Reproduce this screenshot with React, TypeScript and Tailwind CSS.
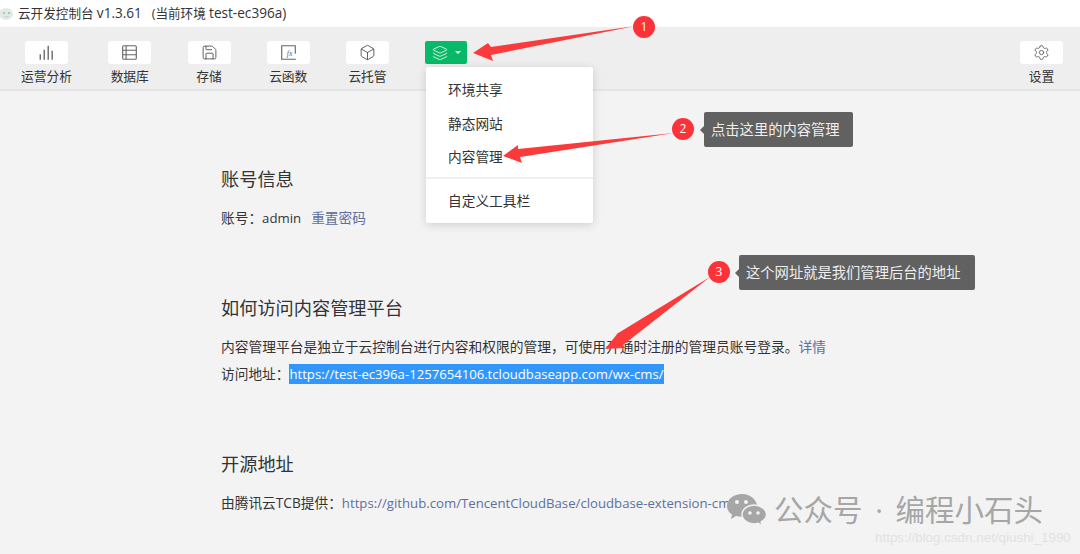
import React from "react";
import { Box, Layers, Save, Settings } from "lucide-react";

const cjk = "font-['Open_Sans','Noto_Sans_CJK_SC',sans-serif]";

const BarsIcon = () => (
  <svg width="17" height="17" viewBox="0 0 15 15" fill="none" stroke="#666" strokeWidth="1.200">
    <path d="M2 9v5M5.500 5v9M9 1.500v12.500M12.500 6v8" />
  </svg>
);

const TableIcon = () => (
  <svg width="17" height="17" viewBox="0 0 15 15" fill="none" stroke="#666" strokeWidth="1">
    <rect x="1.500" y="1.500" width="12" height="12" rx="1" />
    <path d="M1.500 5.500h12M1.500 9.500h12M4.500 1.500v12" />
  </svg>
);

const FxIcon = () => (
  <svg width="17" height="17" viewBox="0 0 15 15" fill="none" stroke="#666" strokeWidth="1">
    <path d="M14 13.500H1.500v-12h12v7" />
    <text x="6" y="11" fontSize="7" fontStyle="italic" fill="#666" stroke="none" fontFamily="Liberation Serif, serif">fx</text>
  </svg>
);

const tools = [
  { label: "运营分析", icon: <BarsIcon /> },
  { label: "数据库", icon: <TableIcon /> },
  { label: "存储", icon: <Save size={17} strokeWidth={1.300} color="#555" /> },
  { label: "云函数", icon: <FxIcon /> },
  { label: "云托管", icon: <Box size={17} strokeWidth={1.300} color="#555" /> },
];

const ToolItem = ({ label, icon }: { label: string; icon: React.ReactNode }) => (
  <div className="flex flex-col items-center">
    <div className="flex h-[23px] w-[43px] items-center justify-center rounded-[3px] bg-white">{icon}</div>
    <div className="mt-[3px] text-[12.75px] leading-[18px] text-[#333]">{label}</div>
  </div>
);

const Section = ({ title, className, children }: { title: string; className: string; children: React.ReactNode }) => (
  <section className={className}>
    <h2 className="text-[18.2px] leading-[26px] text-[#333]">{title}</h2>
    {children}
  </section>
);

const Tip = ({ text, className }: { text: string; className: string }) => (
  <div className={`absolute flex h-[35px] items-center rounded-[2px] bg-[#616161] pl-[7px] text-[14.3px] text-[#eeeeee] ${className}`}>
    <span className="absolute left-[-4px] top-[14px] h-0 w-0 border-y-[4px] border-r-[4px] border-y-transparent border-r-[#616161]" />
    {text}
  </div>
);

const Badge = ({ n, className }: { n: number; className: string }) => (
  <div className={`absolute flex h-[22px] w-[22px] items-center justify-center rounded-full bg-[#fb3338] text-[12px] text-white ${className}`}>{n}</div>
);

const AppIcon = () => (
  <svg className="mr-[4px]" width="14" height="14" viewBox="0 0 14 14">
    <ellipse cx="6" cy="7" rx="7" ry="6" fill="#e3e9e5" />
    <circle cx="4" cy="6" r="1" fill="#7fc8a0" />
    <circle cx="9" cy="6" r="1" fill="#7fc8a0" />
    <path d="M4.500 9.500q2 1.200 4 0" fill="none" stroke="#9fcab2" strokeWidth="0.800" />
  </svg>
);

export default function App() {
  return (
    <div className={`relative h-[554px] w-[1080px] overflow-hidden bg-[#f3f3f3] ${cjk}`}>
      <header className="flex h-[27px] items-center bg-white text-[12.6px] text-[#333]">
        <AppIcon />
        <span className="whitespace-pre">
          云开发控制台 <span className="text-[13.6px]">v1.3.61</span>
          {"   ("}当前环境 <span className="text-[13.6px]">test-ec396a)</span>
        </span>
      </header>

      <nav className="flex h-[64px] items-start gap-[36.250px] border-b-2 border-[#e4e4e4] bg-[#eeeeee] pl-[21px] pr-[17px] pt-[14px]">
        {tools.map((t) => (
          <ToolItem key={t.label} label={t.label} icon={t.icon} />
        ))}
        <div className="flex h-[23px] w-[42px] items-center justify-center gap-[7px] rounded-[2px] bg-[#07b968]">
          <Layers size={16} strokeWidth={1.200} color="#fff" />
          <span className="h-0 w-0 border-x-[3px] border-t-[3px] border-x-transparent border-t-white" />
        </div>
        <div className="ml-auto">
          <ToolItem label="设置" icon={<Settings size={17} strokeWidth={1.200} color="#555" />} />
        </div>
      </nav>

      <main className="pl-[221px]">
        <Section title="账号信息" className="pt-[75px]">
          <p className="mt-[15px] text-[13.7px] leading-[22px] text-[#333]">
            账号{"\uFF1A"}<span className="text-[13.2px]">admin</span>
            <a className="ml-[10px] text-[#5f6f9e]">重置密码</a>
          </p>
        </Section>
        <Section title="如何访问内容管理平台" className="pt-[66px]">
          <p className="mt-[12px] text-[13.75px] leading-[27px] text-[#333]">
            内容管理平台是独立于云控制台进行内容和权限的管理{"\uFF0C"}可使用开通时注册的管理员账号登录{"\u3002"}<a className="text-[#5f6f9e]">详情</a>
          </p>
          <p className="text-[13.7px] leading-[27px] text-[#333]">
            访问地址{"\uFF1A"}<span className="bg-[#3297fd] py-[1px] text-[13.14px] text-white">https://test-ec396a-1257654106.tcloudbaseapp.com/wx-cms/</span>
          </p>
        </Section>
        <Section title="开源地址" className="pt-[63px]">
          <p className="mt-[15px] text-[13.7px] leading-[22px] text-[#333]">
            由腾讯云TCB提供{"\uFF1A"}<a className="text-[13.2px] text-[#5f6f9e]">https://github.com/TencentCloudBase/cloudbase-extension-cms</a>
          </p>
        </Section>
      </main>

      {/* 下拉菜单 */}
      <div className="absolute left-[426px] top-[67px] w-[167px] rounded-[2px] bg-white pt-[7px] text-[13.7px] text-[#333] shadow-[0_2px_10px_rgba(0,0,0,0.15)]">
        <div className="flex h-[33.500px] items-center pl-[22px]">环境共享</div>
        <div className="flex h-[33.500px] items-center pl-[22px]">静态网站</div>
        <div className="flex h-[33.500px] items-center pl-[22px]">内容管理</div>
        <div className="mt-[2px] h-[2px] bg-[#efefef]" />
        <div className="flex h-[44px] items-center pl-[22px] pt-[1px]">自定义工具栏</div>
      </div>

      {/* 标注 */}
      <svg className="pointer-events-none absolute left-0 top-0" width="1080" height="554" fill="#fb3b3b">
        <polygon points="635,26 491,47 488,43 473,53 493,61 491,55" />
        <polygon points="674,133 518,149 518,145 503,156 522,163 520,157" />
        <polygon points="710,277 615,335 618,333 605,349 625,348 623,345" />
      </svg>
      <Badge n={1} className="left-[633px] top-[16px]" />
      <Badge n={2} className="left-[672px] top-[118px]" />
      <Badge n={3} className="left-[708px] top-[261px]" />
      <Tip text="点击这里的内容管理" className="left-[704px] top-[112px] w-[149px]" />
      <Tip text="这个网址就是我们管理后台的地址" className="left-[739px] top-[255px] w-[236px]" />

      {/* 水印 */}
      <svg className="absolute left-[726px] top-[492px]" width="42" height="36" viewBox="0 0 42 36">
        <path d="M16 2C7.500 2 1 7.500 1 14c0 3.500 2 6.500 5 8.500L5 27l5-3c2 .5 4 .8 6 .8 8.500 0 15-5.500 15-11S24.500 2 16 2z" fill="#a6a6a6" />
        <path d="M28 13c-6.500 0-12 4.300-12 9.500S21.500 32 28 32c1.500 0 3-.2 4.300-.7L36 34l-.8-4c3-1.800 5.300-4.500 5.300-7.500C40.500 17.300 34.500 13 28 13z" fill="#a6a6a6" stroke="#f3f3f3" strokeWidth="1.500" />
        <circle cx="11" cy="10" r="2" fill="#f3f3f3" />
        <circle cx="20" cy="10" r="2" fill="#f3f3f3" />
        <circle cx="24" cy="21" r="1.800" fill="#f3f3f3" />
        <circle cx="32" cy="21" r="1.800" fill="#f3f3f3" />
      </svg>
      <div className="absolute left-[774px] top-[490px] flex text-[29.5px] leading-[40px] text-[#a6a6a6]">
        <span>公众号</span>
        <span className="w-[33px] text-center">{"\u00B7"}</span>
        <span>编程小石头</span>
      </div>
      <div className="absolute left-[875px] top-[529px] font-['Liberation_Sans',sans-serif] text-[13.400px] leading-[18px] text-[#e2e2e2]">https://blog.csdn.net/qiushi_1990</div>
    </div>
  );
}
